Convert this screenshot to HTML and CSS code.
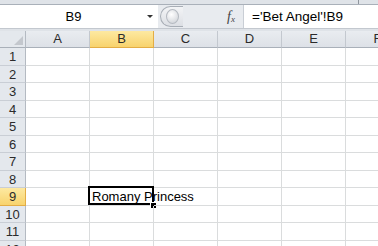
FILE: index.html
```html
<!DOCTYPE html>
<html lang="en">
<head>
    <meta charset="UTF-8">
    <title>Sheet1</title>
    <link rel="stylesheet" href="styles.css">
</head>
<body>
    <div class="top-strip"><div class="strip-left"></div></div>

    <div class="formula-bar">
        <div class="name-box">
            <span class="name-ref">B9</span>
            <span class="name-arrow"></span>
        </div>
        <div class="splitter"><span class="knob"></span></div>
        <div class="fx"><i>f</i><sub>x</sub></div>
        <div class="formula-input">='Bet Angel'!B9</div>
    </div>
    <div class="bar-gap"></div>

    <div class="sheet">
        <div class="row head">
            <div class="corner"></div>
            <div class="col">A</div>
            <div class="col selected">B</div>
            <div class="col">C</div>
            <div class="col">D</div>
            <div class="col">E</div>
            <div class="col">F</div>
        </div>
        <div class="row"><div class="rownum">1</div><div class="cell"></div><div class="cell"></div><div class="cell"></div><div class="cell"></div><div class="cell"></div><div class="cell"></div></div>
        <div class="row"><div class="rownum">2</div><div class="cell"></div><div class="cell"></div><div class="cell"></div><div class="cell"></div><div class="cell"></div><div class="cell"></div></div>
        <div class="row"><div class="rownum">3</div><div class="cell"></div><div class="cell"></div><div class="cell"></div><div class="cell"></div><div class="cell"></div><div class="cell"></div></div>
        <div class="row"><div class="rownum">4</div><div class="cell"></div><div class="cell"></div><div class="cell"></div><div class="cell"></div><div class="cell"></div><div class="cell"></div></div>
        <div class="row"><div class="rownum">5</div><div class="cell"></div><div class="cell"></div><div class="cell"></div><div class="cell"></div><div class="cell"></div><div class="cell"></div></div>
        <div class="row"><div class="rownum">6</div><div class="cell"></div><div class="cell"></div><div class="cell"></div><div class="cell"></div><div class="cell"></div><div class="cell"></div></div>
        <div class="row"><div class="rownum">7</div><div class="cell"></div><div class="cell"></div><div class="cell"></div><div class="cell"></div><div class="cell"></div><div class="cell"></div></div>
        <div class="row"><div class="rownum">8</div><div class="cell"></div><div class="cell"></div><div class="cell"></div><div class="cell"></div><div class="cell"></div><div class="cell"></div></div>
        <div class="row"><div class="rownum selected">9</div><div class="cell"></div><div class="cell active">Romany Princess</div><div class="cell"></div><div class="cell"></div><div class="cell"></div><div class="cell"></div></div>
        <div class="row"><div class="rownum">10</div><div class="cell"></div><div class="cell"></div><div class="cell"></div><div class="cell"></div><div class="cell"></div><div class="cell"></div></div>
        <div class="row"><div class="rownum">11</div><div class="cell"></div><div class="cell"></div><div class="cell"></div><div class="cell"></div><div class="cell"></div><div class="cell"></div></div>
        <div class="row"><div class="rownum">12</div><div class="cell"></div><div class="cell"></div><div class="cell"></div><div class="cell"></div><div class="cell"></div><div class="cell"></div></div>
    </div>
</body>
</html>
```

FILE: styles.css
```css
body {
    margin: 0;
    width: 378px;
    height: 246px;
    overflow: hidden;
    background: #fff;
    font-family: "Liberation Sans", Arial, sans-serif;
    color: #000;
}

/* ribbon edge above the formula bar */
.top-strip {
    display: flex;
    height: 4px;
    background: #dfe3e8;
    border-bottom: 1px solid #a9b0b9;
}
.strip-left {
    width: 358px;
    border-right: 1px solid #8f959d;
}

/* name box + formula bar */
.formula-bar {
    display: flex;
    height: 23px;
    background: #e8ebef;
}
.name-box {
    width: 158px;
    display: flex;
    align-items: center;
    background: #fff;
}
.name-ref {
    flex: 1;
    text-align: center;
    font-size: 13px;
}
.name-arrow {
    width: 0;
    height: 0;
    border-left: 3px solid transparent;
    border-right: 3px solid transparent;
    border-top: 3px solid #333;
    margin-right: 5px;
}
.splitter {
    width: 22px;
    margin: 1px 0 1px 2px;
    display: flex;
    align-items: center;
    justify-content: center;
    border: 1px solid #a8aeb6;
    border-right: none;
    border-radius: 11px 0 0 11px;
    background: linear-gradient(#f3f4f6, #dcdfe4);
}
.knob {
    width: 11px;
    height: 13px;
    border-radius: 50%;
    border: 1px solid #b5bac1;
    background: radial-gradient(circle at 40% 35%, #ffffff, #c9cdd3);
}
.fx {
    width: 52px;
    padding-right: 8px;
    text-align: right;
    line-height: 23px;
    font-family: "Liberation Serif", serif;
    font-size: 14px;
    color: #444;
}
.fx sub {
    font-size: 9px;
    font-style: italic;
    vertical-align: -1px;
}
.formula-input {
    flex: 1;
    background: #fff;
    border-left: 1px solid #c9ced5;
    padding-left: 8px;
    line-height: 23px;
    font-size: 13.5px;
}
.bar-gap {
    height: 2px;
    background: #dfe3e8;
    border-top: 1px solid #c3c8cf;
}

/* grid */
.row {
    display: flex;
    height: 17.5px;
}
.row.head {
    height: 17px;
}
.corner, .rownum {
    position: relative;
    width: 26px;
    flex: none;
    box-sizing: border-box;
    background: #e4e8ed;
    border-right: 1px solid #b4bac2;
    border-bottom: 1px solid #c9ced5;
}
.corner {
    border-bottom-color: #a9b0b9;
}
.corner::after {
    content: "";
    position: absolute;
    right: 2px;
    bottom: 2px;
    border-left: 9px solid transparent;
    border-bottom: 9px solid #c3c7cd;
}
.rownum {
    padding-top: 1px;
    text-align: center;
    font-size: 13px;
    line-height: 16px;
    color: #2b2b2b;
}
.col {
    width: 64px;
    flex: none;
    box-sizing: border-box;
    text-align: center;
    font-size: 13px;
    line-height: 16px;
    color: #2b2b2b;
    background: linear-gradient(#e9ecf0, #dde1e7);
    border-right: 1px solid #c3c8cf;
    border-bottom: 1px solid #a9b0b9;
}
.col.selected, .rownum.selected {
    background: linear-gradient(#fde9a1, #f8d36d);
    border-right-color: #e3ad45;
    border-bottom-color: #e3ad45;
}
.cell {
    position: relative;
    width: 64px;
    flex: none;
    box-sizing: border-box;
    border-right: 1px solid #dadcdd;
    border-bottom: 1px solid #dadcdd;
    padding-left: 2px;
    font-size: 13px;
    line-height: 17.5px;
    white-space: nowrap;
}
.cell.active::before {
    content: "";
    position: absolute;
    left: -2px;
    top: -2px;
    right: -1px;
    bottom: 0;
    border: 2px solid #000;
}
.cell.active::after {
    content: "";
    position: absolute;
    right: -3px;
    bottom: -3px;
    width: 5px;
    height: 5px;
    background: #000;
    border-top: 1px solid #fff;
    border-left: 1px solid #fff;
}
```
